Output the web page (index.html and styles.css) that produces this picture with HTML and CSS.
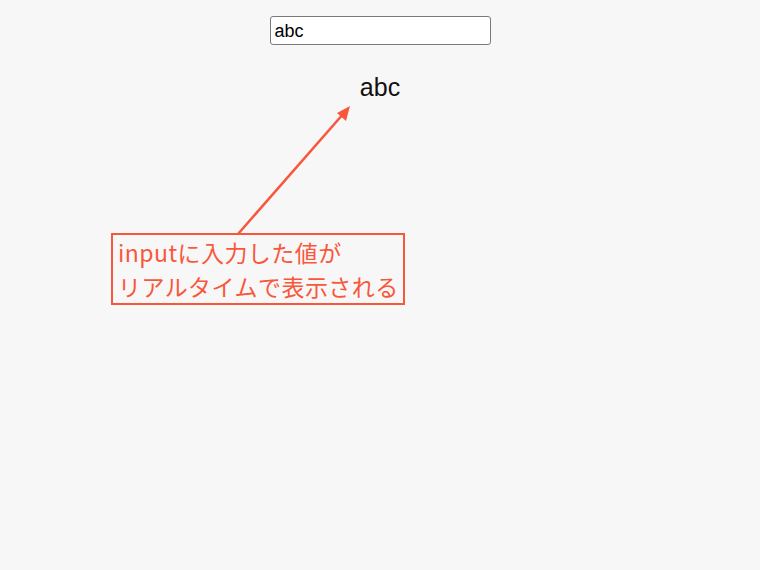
FILE: index.html
```html
<!DOCTYPE html>
<html lang="ja">
<head>
  <meta charset="UTF-8">
  <meta name="viewport" content="width=device-width, initial-scale=1.0">
  <title>Document</title>
  <link rel="stylesheet" href="styles.css">
</head>
<body>
  <div class="app">
    <input class="field" type="text" value="abc">
    <p class="echo">abc</p>
  </div>

  <!-- 注釈 -->
  <svg class="arrow" width="760" height="570" viewBox="0 0 760 570">
    <line x1="238" y1="234" x2="344" y2="113" />
    <polygon points="350,106 337,113 346,121" />
  </svg>
  <div class="note">inputに入力した値が<br>リアルタイムで表示される</div>

  <script>
    var field = document.querySelector('.field')
    var echo = document.querySelector('.echo')
    field.addEventListener('input', function () {
      echo.textContent = field.value
    })
  </script>
</body>
</html>
```

FILE: styles.css
```css
html,
body {
      margin: 0;
      padding: 0;
}

body {
      background: #f7f7f7;
      color: #111;
      font-family: "Liberation Sans", Arial, sans-serif;
      width: 760px;
      height: 570px;
      position: relative;
      overflow: hidden;
}

.app {
      display: flex;
      flex-direction: column;
      align-items: center;
      padding-top: 16px;
}

.field {
      box-sizing: border-box;
      width: 221px;
      height: 29px;
      margin: 0;
      padding: 1px 4px 0;
      border: 1px solid #7a7a7a;
      border-radius: 3px;
      background: #fff;
      font: 18px "Liberation Sans", Arial, sans-serif;
      color: #000;
      outline: none;
}

.echo {
      margin: 28px 0 0;
      font-size: 25px;
      line-height: 28px;
}

.arrow {
      position: absolute;
      left: 0;
      top: 0;
      pointer-events: none;
}

.arrow line {
      stroke: #f9573b;
      stroke-width: 2.5;
}

.arrow polygon {
      fill: #f9573b;
}

.note {
      position: absolute;
      left: 111px;
      top: 233px;
      padding: 0 4px 0 5px;
      border: 2px solid #f9573b;
      color: #f9573b;
      font: 23px/34px "Noto Sans CJK JP", sans-serif;
      letter-spacing: 0.45px;
      white-space: nowrap;
}
```
